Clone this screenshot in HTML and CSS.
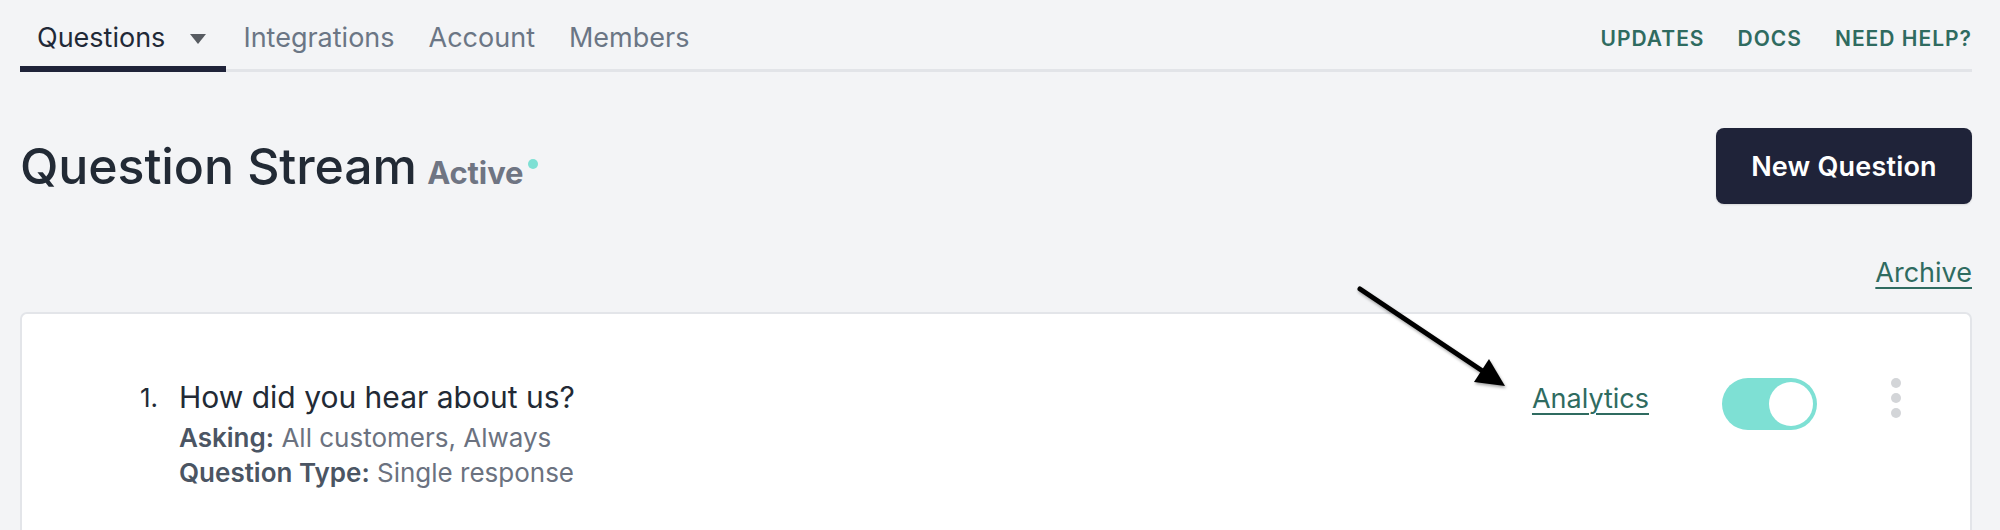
FILE: index.html
```html
<!DOCTYPE html>
<html lang="en">
<head>
<meta charset="utf-8">
<title>Question Stream</title>
<link rel="stylesheet" href="styles.css">
</head>
<body>
<div class="page">
  <nav class="topnav">
    <div class="tabs">
      <a class="tab tab-active">Questions <span class="caret"></span></a>
      <a class="tab">Integrations</a>
      <a class="tab">Account</a>
      <a class="tab">Members</a>
    </div>
    <div class="helplinks">
      <a class="helplink">UPDATES</a>
      <a class="helplink">DOCS</a>
      <a class="helplink">NEED HELP?</a>
    </div>
  </nav>

  <header class="header">
    <h1 class="title">Question Stream <span class="status">Active</span><span class="status-dot"></span></h1>
    <button class="btn-primary">New Question</button>
  </header>

  <div class="archive-row"><a class="link archive">Archive</a></div>

  <section class="card">
    <div class="question">
      <div class="q-num">1.</div>
      <div class="q-body">
        <div class="q-text">How did you hear about us?</div>
        <div class="q-meta"><b>Asking:</b> All customers, Always</div>
        <div class="q-meta"><b>Question Type:</b> Single response</div>
      </div>
    </div>
    <div class="controls">
      <a class="link analytics">Analytics</a>
      <span class="toggle"><span class="knob"></span></span>
      <span class="kebab"><i></i><i></i><i></i></span>
    </div>
  </section>
</div>

<svg class="annotation" width="2000" height="530" viewBox="0 0 2000 530">
  <g class="arrow">
    <line x1="1360" y1="289" x2="1484" y2="372" stroke="#000" stroke-width="5" stroke-linecap="round"/>
    <polygon points="1505,386 1474,382 1489,359" fill="#000"/>
  </g>
</svg>
</body>
</html>
```
FILE: styles.css
```css
* { box-sizing: border-box; }
html, body { margin: 0; padding: 0; }
body {
  background: #f3f4f6;
  font-family: Inter, "Noto Sans", "Liberation Sans", sans-serif;
  color: #1f2937;
  width: 2000px;
  height: 530px;
  overflow: hidden;
  position: relative;
}
a { text-decoration: none; cursor: pointer; }

.page { padding: 0 28px 0 20px; }

/* top nav */
.topnav {
  display: flex;
  justify-content: space-between;
  align-items: flex-start;
  border-bottom: 3px solid #e2e4e8;
  height: 72px;
}
.tabs { display: flex; }
.tab {
  display: flex;
  align-items: center;
  padding: 20px 17px 10px;
  height: 72px;
  line-height: 36px;
  font-size: 27px;
  color: #6b7685;
  border-bottom: 6px solid transparent;
}
.tab-active {
  color: #1f2937;
  border-bottom-color: #1f2339;
  padding-right: 20px;
}
.caret {
  display: inline-block;
  width: 0; height: 0;
  margin-left: 25px;
  margin-top: 2px;
  border-left: 8px solid transparent;
  border-right: 8px solid transparent;
  border-top: 10px solid #575b61;
}
.helplinks { display: flex; gap: 33px; padding-top: 25px; }
.helplink {
  font-size: 21px;
  line-height: 28px;
  font-weight: 600;
  letter-spacing: 1px;
  color: #2f6b60;
}

/* header */
.header {
  display: flex;
  justify-content: space-between;
  align-items: center;
  margin-top: 56px;
  height: 76px;
}
.title {
  margin: 0;
  font-size: 50px;
  font-weight: 500;
  letter-spacing: -0.1px;
  color: #222a35;
}
.status {
  font-size: 31px;
  font-weight: 700;
  color: #6f7583;
  margin-left: -3px;
}
.status-dot {
  display: inline-block;
  width: 10px; height: 10px;
  border-radius: 50%;
  background: #7ee0d4;
  margin-left: 5px;
  vertical-align: 15px;
}
.btn-primary {
  width: 256px;
  height: 76px;
  border: none;
  border-radius: 8px;
  background: #1f2339;
  color: #fff;
  font-family: inherit;
  font-size: 27px;
  font-weight: 600;
  letter-spacing: 0.2px;
  box-shadow: 0 1px 2px rgba(0,0,0,0.12);
}

.archive-row {
  display: flex;
  justify-content: flex-end;
  margin-top: 51px;
  height: 36px;
}
.link {
  color: #2f6b60;
  text-decoration: underline;
  text-underline-offset: 5px;
  text-decoration-thickness: 2px;
  font-size: 27px;
  line-height: 36px;
}

/* card */
.card {
  margin-top: 21px;
  height: 320px;
  background: #fff;
  border: 2px solid #e3e5e9;
  border-radius: 7px;
  padding: 63px 69px 0 118px;
  display: flex;
  justify-content: space-between;
  align-items: flex-start;
}
.question { display: flex; align-items: flex-start; }
.q-num {
  width: 39px;
  font-size: 26px;
  line-height: 40px;
  color: #222a35;
  padding-top: 1px;
}
.q-text {
  font-size: 30px;
  line-height: 40px;
  color: #222a35;
}
.q-meta {
  font-size: 26px;
  line-height: 35px;
  color: #6b7280;
}
.q-text + .q-meta { margin-top: 3px; }
.q-meta b { font-weight: 600; color: #4b5563; }

.controls {
  display: flex;
  align-items: flex-start;
  margin-top: 1px;
}
.analytics { margin-top: 3px; }
.toggle {
  display: flex;
  align-items: center;
  justify-content: flex-end;
  margin-left: 73px;
  width: 95px;
  height: 52px;
  border-radius: 26px;
  background: #7ee0d4;
  padding: 4px;
}
.knob {
  width: 44px; height: 44px;
  border-radius: 50%;
  background: #fff;
}
.kebab {
  display: flex;
  flex-direction: column;
  gap: 5px;
  margin-left: 74px;
}
.kebab i {
  display: block;
  width: 10px; height: 10px;
  border-radius: 50%;
  background: #d3d5d8;
}

/* annotation arrow over content */
.annotation {
  position: absolute;
  left: 0; top: 0;
  pointer-events: none;
}
.arrow { filter: drop-shadow(1px 2px 1.5px rgba(0,0,0,0.35)); }
```
